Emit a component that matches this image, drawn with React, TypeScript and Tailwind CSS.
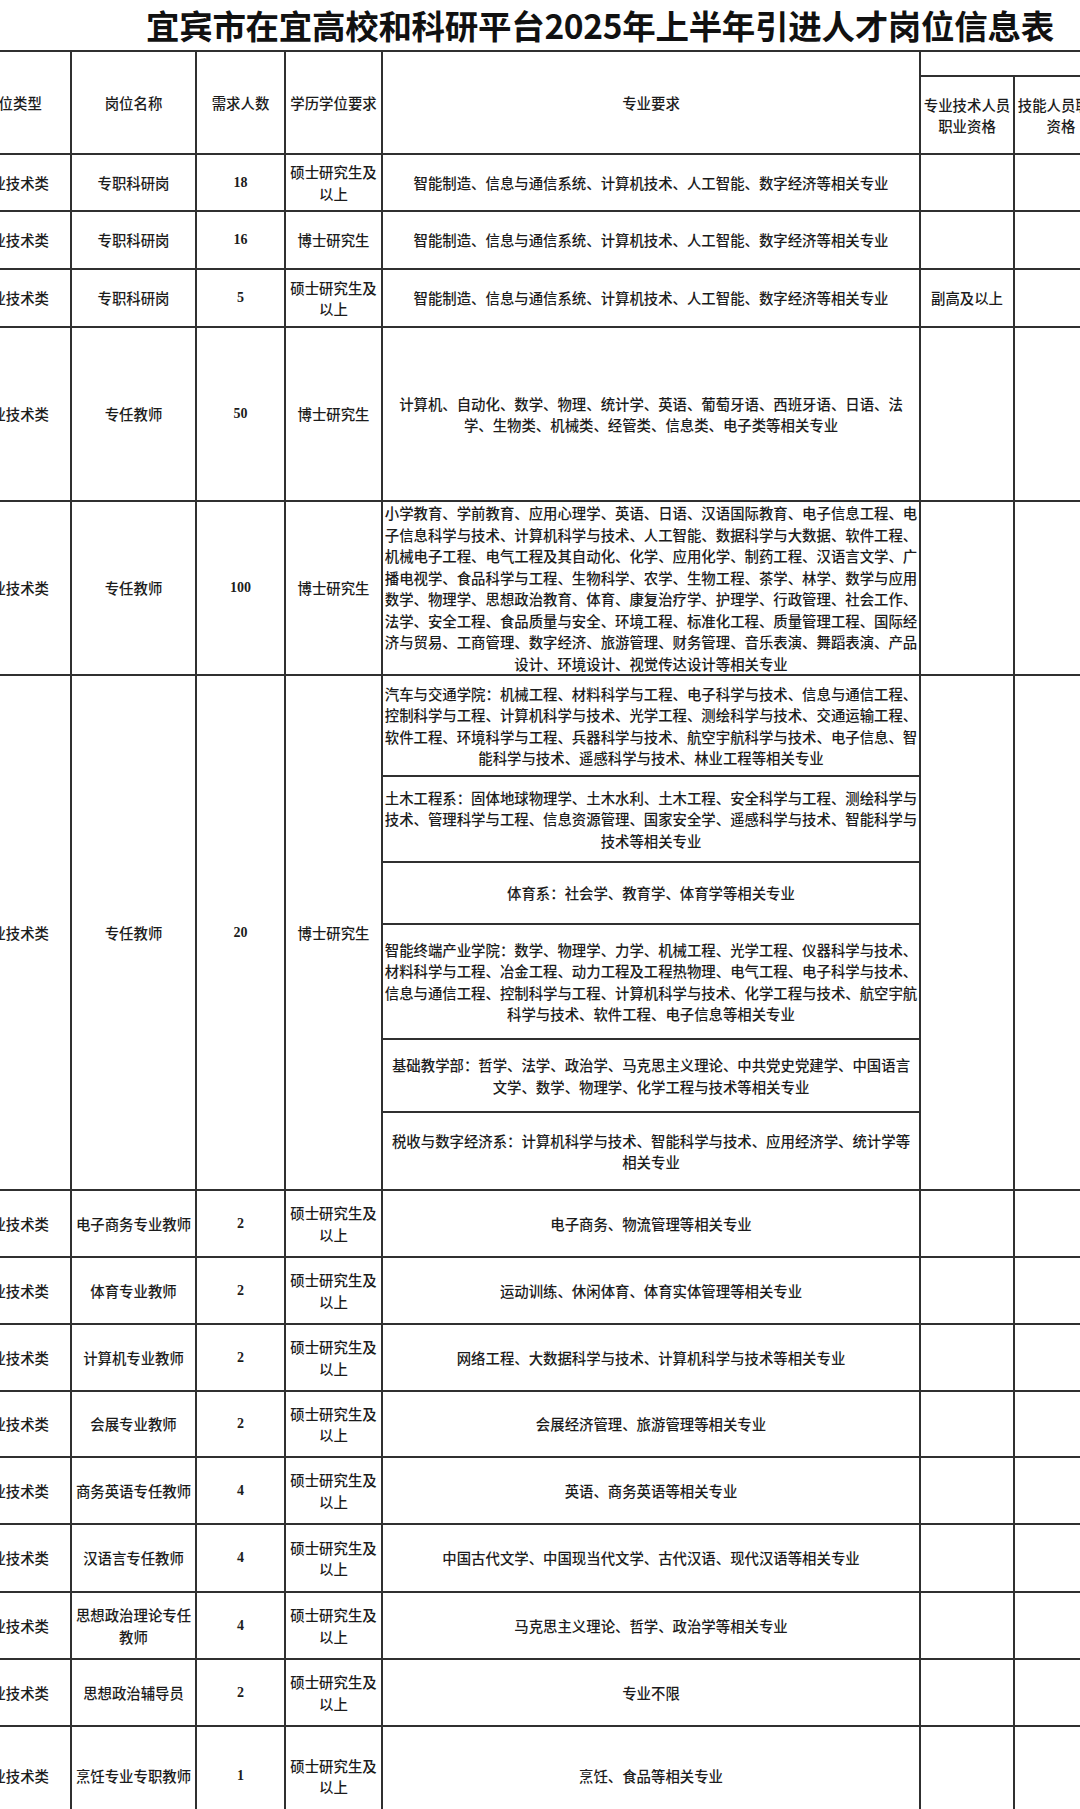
import React from "react";

type Row = {
  name: string[];
  count: string;
  degree: string[];
  major: string[];
  qual?: string;
  h: string;
};

const rowsTop: Row[] = [
  {
    name: ["专职科研岗"],
    count: "18",
    degree: ["硕士研究生及", "以上"],
    major: ["智能制造、信息与通信系统、计算机技术、人工智能、数字经济等相关专业"],
    h: "h-[57px]",
  },
  {
    name: ["专职科研岗"],
    count: "16",
    degree: ["博士研究生"],
    major: ["智能制造、信息与通信系统、计算机技术、人工智能、数字经济等相关专业"],
    h: "h-[58px]",
  },
  {
    name: ["专职科研岗"],
    count: "5",
    degree: ["硕士研究生及", "以上"],
    major: ["智能制造、信息与通信系统、计算机技术、人工智能、数字经济等相关专业"],
    qual: "副高及以上",
    h: "h-[58px]",
  },
  {
    name: ["专任教师"],
    count: "50",
    degree: ["博士研究生"],
    major: [
      "计算机、自动化、数学、物理、统计学、英语、葡萄牙语、西班牙语、日语、法",
      "学、生物类、机械类、经管类、信息类、电子类等相关专业",
    ],
    h: "h-[174px]",
  },
  {
    name: ["专任教师"],
    count: "100",
    degree: ["博士研究生"],
    major: [
      "小学教育、学前教育、应用心理学、英语、日语、汉语国际教育、电子信息工程、电",
      "子信息科学与技术、计算机科学与技术、人工智能、数据科学与大数据、软件工程、",
      "机械电子工程、电气工程及其自动化、化学、应用化学、制药工程、汉语言文学、广",
      "播电视学、食品科学与工程、生物科学、农学、生物工程、茶学、林学、数学与应用",
      "数学、物理学、思想政治教育、体育、康复治疗学、护理学、行政管理、社会工作、",
      "法学、安全工程、食品质量与安全、环境工程、标准化工程、质量管理工程、国际经",
      "济与贸易、工商管理、数字经济、旅游管理、财务管理、音乐表演、舞蹈表演、产品",
      "设计、环境设计、视觉传达设计等相关专业",
    ],
    h: "h-[174px]",
  },
];

const subRows: { lines: string[]; h: string }[] = [
  {
    lines: [
      "汽车与交通学院：机械工程、材料科学与工程、电子科学与技术、信息与通信工程、",
      "控制科学与工程、计算机科学与技术、光学工程、测绘科学与技术、交通运输工程、",
      "软件工程、环境科学与工程、兵器科学与技术、航空宇航科学与技术、电子信息、智",
      "能科学与技术、遥感科学与技术、林业工程等相关专业",
    ],
    h: "h-[101px]",
  },
  {
    lines: [
      "土木工程系：固体地球物理学、土木水利、土木工程、安全科学与工程、测绘科学与",
      "技术、管理科学与工程、信息资源管理、国家安全学、遥感科学与技术、智能科学与",
      "技术等相关专业",
    ],
    h: "h-[86px]",
  },
  {
    lines: ["体育系：社会学、教育学、体育学等相关专业"],
    h: "h-[62px]",
  },
  {
    lines: [
      "智能终端产业学院：数学、物理学、力学、机械工程、光学工程、仪器科学与技术、",
      "材料科学与工程、冶金工程、动力工程及工程热物理、电气工程、电子科学与技术、",
      "信息与通信工程、控制科学与工程、计算机科学与技术、化学工程与技术、航空宇航",
      "科学与技术、软件工程、电子信息等相关专业",
    ],
    h: "h-[115px]",
  },
  {
    lines: [
      "基础教学部：哲学、法学、政治学、马克思主义理论、中共党史党建学、中国语言",
      "文学、数学、物理学、化学工程与技术等相关专业",
    ],
    h: "h-[73px]",
  },
  {
    lines: [
      "税收与数字经济系：计算机科学与技术、智能科学与技术、应用经济学、统计学等",
      "相关专业",
    ],
    h: "h-[78px]",
  },
];

const M = ["硕士研究生及", "以上"];

const rowsBottom: Row[] = [
  { name: ["电子商务专业教师"], count: "2", degree: M, major: ["电子商务、物流管理等相关专业"], h: "h-[67px]" },
  { name: ["体育专业教师"], count: "2", degree: M, major: ["运动训练、休闲体育、体育实体管理等相关专业"], h: "h-[67px]" },
  { name: ["计算机专业教师"], count: "2", degree: M, major: ["网络工程、大数据科学与技术、计算机科学与技术等相关专业"], h: "h-[67px]" },
  { name: ["会展专业教师"], count: "2", degree: M, major: ["会展经济管理、旅游管理等相关专业"], h: "h-[66px]" },
  { name: ["商务英语专任教师"], count: "4", degree: M, major: ["英语、商务英语等相关专业"], h: "h-[67px]" },
  { name: ["汉语言专任教师"], count: "4", degree: M, major: ["中国古代文学、中国现当代文学、古代汉语、现代汉语等相关专业"], h: "h-[68px]" },
  { name: ["思想政治理论专任", "教师"], count: "4", degree: M, major: ["马克思主义理论、哲学、政治学等相关专业"], h: "h-[67px]" },
  { name: ["思想政治辅导员"], count: "2", degree: M, major: ["专业不限"], h: "h-[67px]" },
  { name: ["烹饪专业专职教师"], count: "1", degree: M, major: ["烹饪、食品等相关专业"], h: "h-[100px]" },
];

const td = "border-2 border-[#303030] text-center align-middle p-0";
const num = "font-['Liberation_Serif',serif] font-bold text-[14px]";

function Lines({ lines }: { lines: string[] }) {
  return (
    <>
      {lines.map((l, i) => (
        <div key={i} className="whitespace-nowrap">
          {l}
        </div>
      ))}
    </>
  );
}

function DataRow({ r }: { r: Row }) {
  return (
    <tr className={r.h}>
      <td className={td}>专业技术类</td>
      <td className={td}>
        <Lines lines={r.name} />
      </td>
      <td className={`${td} ${num}`}>{r.count}</td>
      <td className={td}>
        <Lines lines={r.degree} />
      </td>
      <td className={td}>
        <Lines lines={r.major} />
      </td>
      <td className={td}>{r.qual ?? ""}</td>
      <td className={td}></td>
    </tr>
  );
}

export default function App() {
  return (
    <div className="w-[1080px] h-[1809px] overflow-hidden bg-white text-[#1c1c1c] font-['Noto_Sans_CJK_SC',sans-serif]">
      <div className="h-[50px] pl-[146px] flex items-center">
        <h1 className="text-[33.5px] leading-none font-bold tracking-[-0.3px] text-[#111] whitespace-nowrap">
          宜宾市在宜高校和科研平台2025年上半年引进人才岗位信息表
        </h1>
      </div>
      <table className="border-collapse table-fixed ml-[-46px] w-[1153px] text-[14.4px] leading-[21.5px] font-medium">
        <colgroup>
          <col className="w-[116px]" />
          <col className="w-[125px]" />
          <col className="w-[89px]" />
          <col className="w-[97px]" />
          <col className="w-[538px]" />
          <col className="w-[94px]" />
          <col className="w-[94px]" />
        </colgroup>
        <tbody>
          <tr className="h-[25px]">
            <td className={td} rowSpan={2}>
              岗位类型
            </td>
            <td className={td} rowSpan={2}>
              岗位名称
            </td>
            <td className={td} rowSpan={2}>
              需求人数
            </td>
            <td className={td} rowSpan={2}>
              学历学位要求
            </td>
            <td className={td} rowSpan={2}>
              专业要求
            </td>
            <td className={td} colSpan={2}></td>
          </tr>
          <tr className="h-[78px]">
            <td className={td}>
              <Lines lines={["专业技术人员", "职业资格"]} />
            </td>
            <td className={td}>
              <Lines lines={["技能人员职业", "资格"]} />
            </td>
          </tr>
          {rowsTop.map((r, i) => (
            <DataRow key={i} r={r} />
          ))}
          {subRows.map((s, i) => (
            <tr key={"s" + i} className={s.h}>
              {i === 0 && (
                <>
                  <td className={td} rowSpan={6}>
                    专业技术类
                  </td>
                  <td className={td} rowSpan={6}>
                    专任教师
                  </td>
                  <td className={`${td} ${num}`} rowSpan={6}>
                    20
                  </td>
                  <td className={td} rowSpan={6}>
                    博士研究生
                  </td>
                </>
              )}
              <td className={td}>
                <Lines lines={s.lines} />
              </td>
              {i === 0 && (
                <>
                  <td className={td} rowSpan={6}></td>
                  <td className={td} rowSpan={6}></td>
                </>
              )}
            </tr>
          ))}
          {rowsBottom.map((r, i) => (
            <DataRow key={"b" + i} r={r} />
          ))}
        </tbody>
      </table>
    </div>
  );
}
